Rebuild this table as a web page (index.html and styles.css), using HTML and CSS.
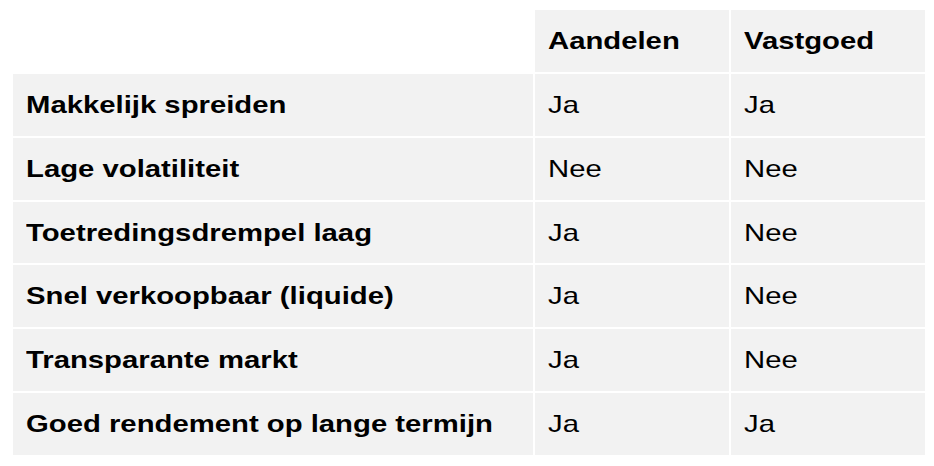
FILE: index.html
```html
<!DOCTYPE html>
<html lang="nl">
<head>
<meta charset="utf-8">
<title>Aandelen vs Vastgoed</title>
<link rel="stylesheet" href="styles.css">
</head>
<body>
<table class="compare">
  <thead>
    <tr>
      <th class="blank"></th>
      <th class="col"><span class="txt">Aandelen</span></th>
      <th class="col"><span class="txt">Vastgoed</span></th>
    </tr>
  </thead>
  <tbody>
    <tr><th class="label"><span class="txt">Makkelijk spreiden</span></th><td><span class="txt">Ja</span></td><td><span class="txt">Ja</span></td></tr>
    <tr><th class="label"><span class="txt">Lage volatiliteit</span></th><td><span class="txt">Nee</span></td><td><span class="txt">Nee</span></td></tr>
    <tr><th class="label"><span class="txt">Toetredingsdrempel laag</span></th><td><span class="txt">Ja</span></td><td><span class="txt">Nee</span></td></tr>
    <tr><th class="label"><span class="txt">Snel verkoopbaar (liquide)</span></th><td><span class="txt">Ja</span></td><td><span class="txt">Nee</span></td></tr>
    <tr><th class="label"><span class="txt">Transparante markt</span></th><td><span class="txt">Ja</span></td><td><span class="txt">Nee</span></td></tr>
    <tr><th class="label"><span class="txt">Goed rendement op lange termijn</span></th><td><span class="txt">Ja</span></td><td><span class="txt">Ja</span></td></tr>
  </tbody>
</table>
</body>
</html>
```

FILE: styles.css
```css
html, body {
  background: #ffffff;
}
body {
  margin: 8px 0 0 11px;
  font-family: "Liberation Sans", Arial, sans-serif;
  color: #000000;
}
.compare {
  border-collapse: separate;
  border-spacing: 2px;
  font-size: 24px;
  table-layout: fixed;
}
.compare th,
.compare td {
  height: 61.86px;
  padding: 0 13px;
  text-align: left;
  vertical-align: middle;
  background: #f2f2f2;
  box-sizing: border-box;
  white-space: nowrap;
}
.compare th {
  font-weight: bold;
}
.compare td {
  font-weight: normal;
}
.compare .blank {
  background: transparent;
  width: 520px;
}
.compare .col {
  width: 194px;
}
.txt {
  display: inline-block;
  transform: scaleX(1.22);
  transform-origin: left center;
}
```
